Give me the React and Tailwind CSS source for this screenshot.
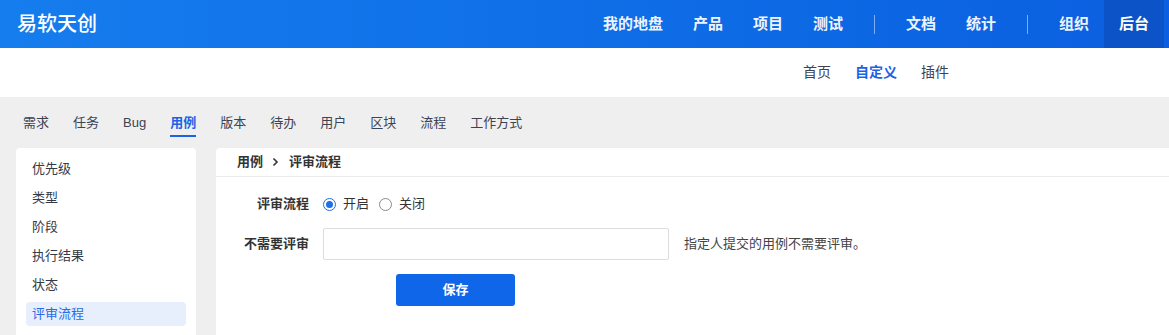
import React from "react";

const FONT = "font-['Liberation_Sans','Noto_Sans_CJK_SC',sans-serif]";

function Radio({ checked }) {
  return checked ? (
    <span className="shrink-0 box-border w-[13px] h-[13px] rounded-full border border-[#1f6fe8] flex items-center justify-center">
      <span className="block w-[7px] h-[7px] rounded-full bg-[#1f6fe8]" />
    </span>
  ) : (
    <span className="shrink-0 block box-border w-[13px] h-[13px] rounded-full border border-[#8a8a8a]" />
  );
}

export default function App() {
  const nav1 = ["我的地盘", "产品", "项目", "测试"];
  const nav2 = ["文档", "统计"];
  const tabs = ["需求", "任务", "Bug", "用例", "版本", "待办", "用户", "区块", "流程", "工作方式"];
  const side = ["优先级", "类型", "阶段", "执行结果", "状态", "评审流程"];
  return (
    <div className={`min-h-screen bg-[#efefef] ${FONT} flex flex-col`}>
      <header className="h-[48px] flex items-center bg-gradient-to-r from-[#167dee] to-[#0b5fe0] pl-[17px] pr-[5px]">
        <div className="text-[20px] text-white leading-none font-medium">易软天创</div>
        <nav className="ml-auto flex items-center h-full text-[15px] font-bold text-[#eef4ff]">
          {nav1.map((t) => (
            <span key={t} className="px-[15px]">{t}</span>
          ))}
          <span className="mx-[16px] w-px h-[19px] bg-[#7eaef5]" />
          {nav2.map((t) => (
            <span key={t} className="px-[15px]">{t}</span>
          ))}
          <span className="mx-[16px] w-px h-[19px] bg-[#7eaef5]" />
          <span className="px-[15px]">组织</span>
          <span className="px-[15px] h-full flex items-center bg-[#0b53c6] text-white">后台</span>
        </nav>
      </header>

      <div className="h-[49px] bg-white flex items-center pl-[803px] gap-[24px] text-[14px] text-[#3c4353]">
        <span>首页</span>
        <span className="text-[#1b63e6] font-bold">自定义</span>
        <span>插件</span>
      </div>

      <div className="h-[51px] flex items-start pt-[16px] pl-[23px] gap-[24px] text-[13px] text-[#3c4353]">
        {tabs.map((t) => (
          <div key={t} className="flex flex-col items-center">
            <span className={`leading-[20px] ${t === "用例" ? "text-[#1b63e6] font-bold" : ""}`}>{t}</span>
            <span className={`mt-[2px] h-[2px] w-full ${t === "用例" ? "bg-[#1b63e6]" : ""}`} />
          </div>
        ))}
      </div>

      <div className="flex-1 flex gap-[20px] pl-[16px]">
        <aside className="w-[180px] bg-white rounded-t-[4px] pt-[9px] px-[10px] flex flex-col gap-[5px]">
          {side.map((t) => (
            <div
              key={t}
              className={`h-[24px] px-[6px] flex items-center text-[13px] rounded-[4px] ${
                t === "评审流程" ? "bg-[#e6effb] text-[#2b6ae6]" : "text-[#333a48]"
              }`}
            >
              {t}
            </div>
          ))}
        </aside>

        <main className="flex-1 bg-white rounded-tl-[4px]">
          <div className="h-[29px] border-b border-[#ececec] pl-[21px] flex items-center text-[13px] font-bold text-[#333]">
            <span>用例</span>
            <svg className="ml-[9px] mr-[10px]" width="7" height="10" viewBox="0 0 7 10">
              <polyline points="1.5,1.5 5,5 1.5,8.5" fill="none" stroke="#333" strokeWidth="1.6" />
            </svg>
            <span>评审流程</span>
          </div>

          <div className="pt-[15px] text-[13px] text-[#333]">
            <div className="h-[24px] flex items-center">
              <span className="w-[93px] text-right font-bold">评审流程</span>
              <div className="ml-[14px] flex items-center">
                <Radio checked />
                <span className="ml-[7px]">开启</span>
                <span className="ml-[10px] flex items-center">
                  <Radio />
                </span>
                <span className="ml-[7px]">关闭</span>
              </div>
            </div>

            <div className="mt-[12px] h-[32px] flex items-center">
              <span className="w-[93px] text-right font-bold">不需要评审</span>
              <div className="ml-[14px] w-[346px] h-[32px] border border-[#dcdcdc] rounded-[2px] bg-white" />
              <span className="ml-[15px] text-[#444]">指定人提交的用例不需要评审。</span>
            </div>

            <div className="mt-[14px] ml-[180px]">
              <button className="w-[119px] h-[32px] rounded-[3px] bg-[#0f66e9] text-white font-bold text-[13px]">
                保存
              </button>
            </div>
          </div>
        </main>
      </div>
    </div>
  );
}
